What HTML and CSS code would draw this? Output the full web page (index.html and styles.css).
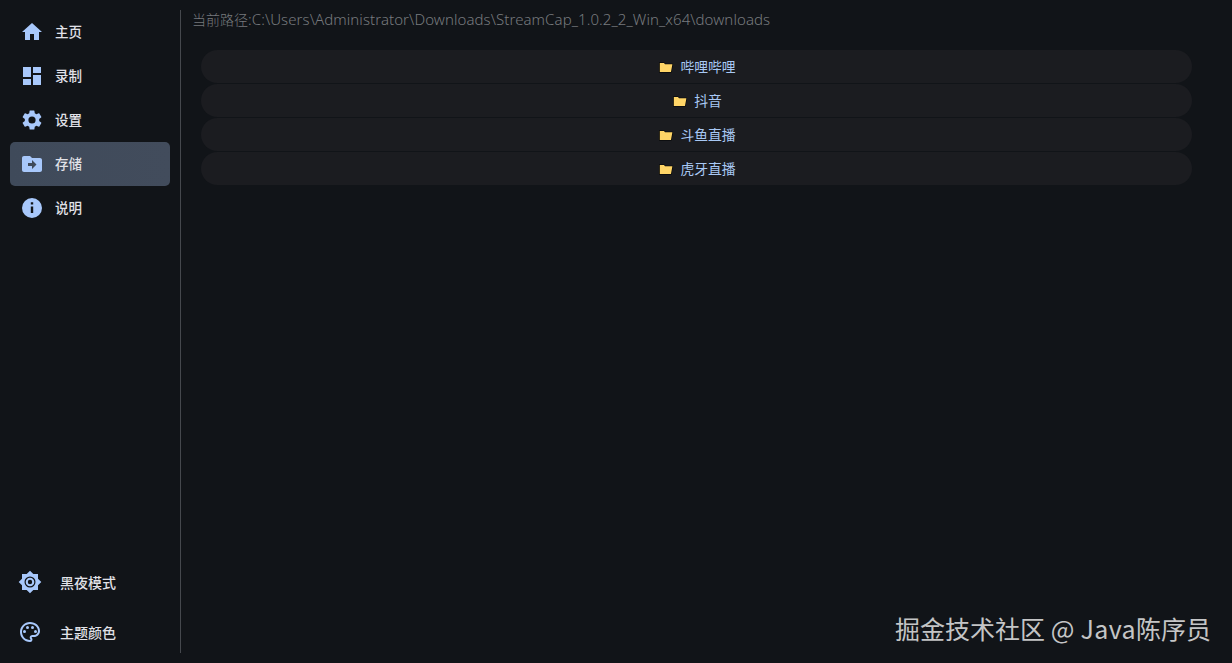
FILE: index.html
```html
<!DOCTYPE html>
<html lang="zh">
<head>
<meta charset="utf-8">
<title>StreamCap</title>
<link rel="stylesheet" href="styles.css">
</head>
<body>
<div class="app">
  <aside class="sidebar">
    <nav class="nav">
      <a class="nav-item"><svg class="icon" viewBox="0 0 24 24"><path d="M10 20v-6h4v6h5v-8h3L12 3 2 12h3v8z"/></svg><span>主页</span></a>
      <a class="nav-item"><svg class="icon" viewBox="0 0 24 24"><path d="M3 13h8V3H3zm0 8h8v-6H3zm10 0h8V11h-8zm0-18v6h8V3z"/></svg><span>录制</span></a>
      <a class="nav-item"><svg class="icon" viewBox="0 0 24 24"><path d="M19.14 12.94c.04-.3.06-.61.06-.94s-.02-.64-.07-.94l2.03-1.58a.49.49 0 0 0 .12-.61l-1.92-3.32a.49.49 0 0 0-.59-.22l-2.39.96a7.03 7.03 0 0 0-1.62-.94l-.36-2.54a.48.48 0 0 0-.48-.41h-3.84a.48.48 0 0 0-.47.41l-.36 2.54c-.59.24-1.13.57-1.62.94l-2.39-.96a.49.49 0 0 0-.59.22L2.74 8.87a.47.47 0 0 0 .12.61l2.03 1.58c-.05.3-.09.63-.09.94s.02.64.07.94l-2.03 1.58a.49.49 0 0 0-.12.61l1.92 3.32c.12.22.37.29.59.22l2.39-.96c.5.38 1.03.7 1.62.94l.36 2.54c.05.24.24.41.48.41h3.84c.24 0 .44-.17.47-.41l.36-2.54c.59-.24 1.13-.56 1.62-.94l2.39.96c.22.08.47 0 .59-.22l1.92-3.32a.47.47 0 0 0-.12-.61zM12 15.6A3.6 3.6 0 1 1 12 8.4a3.6 3.6 0 0 1 0 7.2z"/></svg><span>设置</span></a>
      <a class="nav-item active"><svg class="icon" viewBox="0 0 24 24"><path d="M20 6h-8l-2-2H4c-1.1 0-2 .9-2 2v12c0 1.1.9 2 2 2h16c1.1 0 2-.9 2-2V8c0-1.100-.9-2-2-2zm-8 11v-3H8v-3h4V8l4.500 4.500z" fill-rule="evenodd"/></svg><span>存储</span></a>
      <a class="nav-item"><svg class="icon" viewBox="0 0 24 24"><path d="M12 2a10 10 0 1 0 0 20 10 10 0 0 0 0-20zM13.200 17h-2.400v-6.500h2.400zm0-8.500h-2.400V6.200h2.400z"/></svg><span>说明</span></a>
    </nav>
    <div class="tools">
      <a class="tool-item"><svg class="icon" viewBox="0 0 24 24"><path fill-rule="evenodd" d="M20 8.690V4h-4.690L12 .69 8.690 4H4v4.690L.69 12 4 15.310V20h4.690L12 23.310 15.310 20H20v-4.690L23.310 12zM12 17.500a5.500 5.500 0 1 1 0-11 5.500 5.500 0 0 1 0 11z"/><path fill-rule="evenodd" d="M12 7.700a4.300 4.300 0 1 0 0 8.600 4.300 4.300 0 0 0 0-8.600zm0 6.500a2.200 2.200 0 1 1 0-4.400 2.200 2.200 0 0 1 0 4.400z"/></svg><span>黑夜模式</span></a>
      <a class="tool-item"><svg class="icon" viewBox="0 0 24 24"><path d="M12 2C6.490 2 2 6.490 2 12s4.490 10 10 10a2.500 2.500 0 0 0 1.800-4.230.5.5 0 0 1 .36-.85H16c3.310 0 6-2.690 6-6C22 5.980 17.510 2 12 2zm4 13h-1.840a2.500 2.500 0 0 0-1.800 4.230.5.5 0 0 1-.36.770C7.590 20 4 16.410 4 12s3.590-8 8-8 8 3.140 8 7c0 2.210-1.790 4-4 4z"/><circle cx="6.500" cy="11.500" r="1.500"/><circle cx="9.500" cy="7.500" r="1.500"/><circle cx="14.500" cy="7.500" r="1.500"/><circle cx="17.500" cy="11.500" r="1.500"/></svg><span>主题颜色</span></a>
    </div>
  </aside>
  <main class="content">
    <div class="path">当前路径<span class="path-value">:C:\Users\Administrator\Downloads\StreamCap_1.0.2_2_Win_x64\downloads</span></div>
    <ul class="folders">
      <li class="folder"><span class="emoji"><svg viewBox="0 0 14 11"><path class="f-shadow" d="M0 .5h5.200l1 1.200H14l-1.500 8.800H0z"/><path class="f-fill" d="M.8 1h4.200l1 1.200h7.400l-1.400 7.700H.8z"/></svg></span>哔哩哔哩</li>
      <li class="folder"><span class="emoji"><svg viewBox="0 0 14 11"><path class="f-shadow" d="M0 .5h5.200l1 1.200H14l-1.500 8.800H0z"/><path class="f-fill" d="M.8 1h4.200l1 1.200h7.400l-1.400 7.700H.8z"/></svg></span>抖音</li>
      <li class="folder"><span class="emoji"><svg viewBox="0 0 14 11"><path class="f-shadow" d="M0 .5h5.200l1 1.200H14l-1.500 8.800H0z"/><path class="f-fill" d="M.8 1h4.200l1 1.200h7.400l-1.400 7.700H.8z"/></svg></span>斗鱼直播</li>
      <li class="folder"><span class="emoji"><svg viewBox="0 0 14 11"><path class="f-shadow" d="M0 .5h5.200l1 1.200H14l-1.500 8.800H0z"/><path class="f-fill" d="M.8 1h4.200l1 1.200h7.400l-1.400 7.700H.8z"/></svg></span>虎牙直播</li>
    </ul>
  </main>
</div>
<div class="watermark">掘金技术社区 <span class="watermark-latin">@ Java</span>陈序员</div>
</body>
</html>
```
FILE: styles.css
```css
* { box-sizing: border-box; }
html, body { margin: 0; height: 100%; }
body {
  background: #111418;
  font-family: "Noto Sans", "Noto Sans CJK SC", sans-serif;
  overflow: hidden;
}
.app { display: flex; height: 663px; padding: 10px 0; }
.sidebar {
  width: 181px;
  flex: none;
  padding: 0 10px;
  border-right: 1px solid #45484d;
  display: flex;
  flex-direction: column;
  justify-content: space-between;
}
.nav { display: flex; flex-direction: column; }
.nav-item {
  height: 44px;
  display: flex;
  align-items: center;
  gap: 11px;
  padding-left: 10px;
  padding-bottom: 1px;
  border-radius: 5px;
  color: #e1e2e8;
  font-size: 13.5px;
  font-weight: 500;
}
.nav-item span { margin-bottom: 2px; }
.nav-item.active { background: linear-gradient(90deg, #3f4a5a, #424c5c); }
.icon { width: 24px; height: 24px; fill: #a8c8fb; flex: none; }
.tools { display: flex; flex-direction: column; gap: 22px; padding-bottom: 7px; }
.tool-item {
  height: 28px;
  display: flex;
  align-items: center;
  gap: 18px;
  padding-left: 8px;
  color: #e1e2e8;
  font-size: 14px;
  font-weight: 500;
}
.content { flex: 1; min-width: 0; padding: 0 40px 0 11px; }
.path {
  height: 20px;
  line-height: 19px;
  font-size: 14px;
  font-weight: 300;
  color: #777a7e;
  white-space: nowrap;
}
.path-value { font-size: 15px; letter-spacing: 0.08px; }
.folders {
  list-style: none;
  margin: 20px 0 0;
  padding: 0 0 0 9px;
  display: flex;
  flex-direction: column;
  gap: 1px;
}
.folder {
  height: 33px;
  padding-bottom: 1px;
  border-radius: 17px;
  background: #1b1c20;
  color: #a8c8f4;
  font-size: 13.8px;
  display: flex;
  align-items: center;
  justify-content: center;
  gap: 7px;
  padding-left: 2px;
}
.emoji { width: 14px; height: 11px; display: flex; margin-top: 2px; }
.emoji svg { width: 14px; height: 11px; }
.f-shadow { fill: #000; }
.f-fill { fill: #ffd567; }
.watermark {
  position: absolute;
  right: 21px;
  top: 610px;
  font-family: "Noto Sans CJK SC", "Noto Sans", sans-serif;
  font-size: 25px;
  line-height: 36px;
  color: #c4c5c6;
  white-space: nowrap;
}
.watermark-latin { letter-spacing: 0.35px; }
```
